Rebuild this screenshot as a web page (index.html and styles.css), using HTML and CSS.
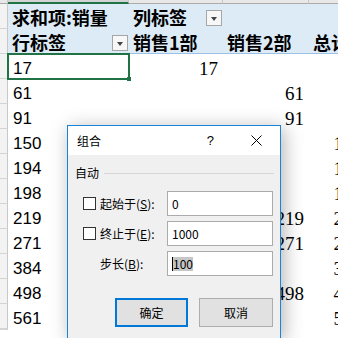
FILE: index.html
```html
<!DOCTYPE html>
<html>
<head>
<meta charset="utf-8">
<link rel="stylesheet" href="styles.css">
</head>
<body>
<div class="sheet">
  <div class="rh top"></div><div class="ch sel"></div><div class="ch"></div><div class="ch"></div><div class="ch"></div>

  <div class="rh"></div><div class="c hd">求和项:销量</div><div class="c hd">列标签<span class="dd"></span></div><div class="c hd"></div><div class="c hd"></div>
  <div class="rh"></div><div class="c hd hb">行标签<span class="dd"></span></div><div class="c hd hb">销售1部</div><div class="c hd hb">销售2部</div><div class="c hd hb">总计</div>

  <div class="rh"></div><div class="c lab active">17<span class="fh"></span></div><div class="c num">17</div><div class="c num"></div><div class="c num">17</div>
  <div class="rh"></div><div class="c lab">61</div><div class="c num"></div><div class="c num">61</div><div class="c num">61</div>
  <div class="rh"></div><div class="c lab">91</div><div class="c num"></div><div class="c num">91</div><div class="c num">91</div>
  <div class="rh"></div><div class="c lab">150</div><div class="c num">150</div><div class="c num"></div><div class="c num">150</div>
  <div class="rh"></div><div class="c lab">194</div><div class="c num">194</div><div class="c num"></div><div class="c num">194</div>
  <div class="rh"></div><div class="c lab">198</div><div class="c num">198</div><div class="c num"></div><div class="c num">198</div>
  <div class="rh"></div><div class="c lab">219</div><div class="c num"></div><div class="c num">219</div><div class="c num">219</div>
  <div class="rh"></div><div class="c lab">271</div><div class="c num"></div><div class="c num">271</div><div class="c num">271</div>
  <div class="rh"></div><div class="c lab">384</div><div class="c num">384</div><div class="c num"></div><div class="c num">384</div>
  <div class="rh"></div><div class="c lab">498</div><div class="c num"></div><div class="c num">498</div><div class="c num">498</div>
  <div class="rh"></div><div class="c lab">561</div><div class="c num">561</div><div class="c num"></div><div class="c num">561</div>
  <div class="rh"></div><div class="c lab"></div><div class="c num"></div><div class="c num"></div><div class="c num"></div>
</div>

<div class="dlg">
  <div class="titlebar">
    <span class="title">组合</span>
    <span class="help">?</span>
    <svg class="close" width="11" height="11" viewBox="0 0 11 11"><path d="M0.5 0.5L10.5 10.5M10.5 0.5L0.5 10.5" stroke="#000" stroke-width="1" fill="none"/></svg>
  </div>
  <div class="dbody">
    <div class="group"><span>自动</span><i class="sep"></i></div>
    <div class="fields">
      <span class="cb"></span><span class="lbl">起始于(<u>S</u>):</span><div class="inp">0</div>
      <span class="cb"></span><span class="lbl">终止于(<u>E</u>):</span><div class="inp">1000</div>
      <span></span><span class="lbl">步长(<u>B</u>):</span><div class="inp"><span class="caret"></span><span class="selt">100</span></div>
    </div>
    <div class="btns"><div class="btn ok">确定</div><div class="btn">取消</div></div>
  </div>
</div>
</body>
</html>
```

FILE: styles.css
```css
html, body {
  margin: 0;
  padding: 0;
  width: 338px;
  height: 338px;
  overflow: hidden;
  background: #fff;
}
body {
  position: relative;
  font-family: "Liberation Sans", "Noto Sans CJK SC", sans-serif;
  color: #000;
}
.sheet {
  display: grid;
  grid-template-columns: 8px 121px 94px 86px 58px;
  grid-template-rows: 4px repeat(13, 25px);
  width: 367px;
}
.rh {
  background: #f3f3f3;
  border-right: 1px solid #c8c8c8;
  border-bottom: 1px solid #d4d4d4;
  box-sizing: border-box;
}
.rh.top {
  background: #e8e8e8;
  border-bottom: 1px solid #ababab;
}
.ch {
  background: #e8e8e8;
  border-bottom: 1px solid #ababab;
  border-right: 1px solid #c8c8c8;
  box-sizing: border-box;
}
.ch.sel {
  background: #d2d2d2;
  border-bottom: 2px solid #217346;
}
.c {
  display: flex;
  align-items: flex-end;
  box-sizing: border-box;
  white-space: nowrap;
  position: relative;
}
.hd {
  background: #ddebf7;
  font-family: "Noto Sans CJK SC", sans-serif;
  font-weight: 700;
  font-size: 18px;
  line-height: 22px;
  padding-left: 4px;
  padding-right: 1px;
  padding-bottom: 1px;
}
.hd.hb {
  border-bottom: 1px solid #9bc2e6;
  padding-bottom: 0;
}
.dd {
  margin-left: auto;
  margin-bottom: 2px;
  width: 16px;
  height: 16px;
  box-sizing: border-box;
  border: 1px solid #a6a6a6;
  background: #f7f7f7;
  display: flex;
  align-items: center;
  justify-content: center;
  flex: none;
}
.dd::after {
  content: "";
  border-left: 3.5px solid transparent;
  border-right: 3.5px solid transparent;
  border-top: 4px solid #444;
  margin-top: 1px;
}
.lab {
  font-family: "Liberation Sans", sans-serif;
  font-size: 17px;
  line-height: 20px;
  padding-left: 5px;
}
.num {
  justify-content: flex-end;
  font-family: "Liberation Serif", serif;
  font-size: 19px;
  line-height: 20px;
  padding-right: 5px;
}
.active {
  outline: 2px solid #217346;
  outline-offset: -1px;
}
.fh {
  position: absolute;
  right: -2px;
  bottom: -2px;
  width: 4px;
  height: 4px;
  background: #217346;
}

/* dialog */
.dlg {
  position: absolute;
  left: 67px;
  top: 125px;
  width: 214px;
  height: 214px;
  box-sizing: border-box;
  border: 1px solid #1883d7;
  background: #f0f0f0;
  box-shadow: 3px 3px 18px rgba(0, 0, 0, 0.3);
  font-family: "Noto Sans CJK SC", sans-serif;
  font-size: 12px;
  display: flex;
  flex-direction: column;
}
.titlebar {
  height: 29px;
  background: #fff;
  display: flex;
  align-items: center;
  padding-left: 9px;
  padding-right: 18px;
  flex: none;
}
.title {
  flex: 1;
  line-height: 16px;
}
.help {
  font-family: "Liberation Sans", sans-serif;
  font-size: 13px;
  margin-right: 37px;
}
.close {
  display: block;
}
.dbody {
  padding: 9px 6px 0 7px;
  display: flex;
  flex-direction: column;
}
.group {
  height: 18px;
  display: flex;
  align-items: center;
  line-height: 18px;
}
.sep {
  flex: 1;
  height: 1px;
  background: #d5d5d5;
  margin-left: 5px;
}
.fields {
  margin-top: 9px;
  padding-left: 8px;
  display: grid;
  grid-template-columns: 17px 67px 106px;
  grid-auto-rows: 25px;
  row-gap: 5px;
  align-items: center;
}
.cb {
  width: 13px;
  height: 13px;
  box-sizing: border-box;
  border: 1px solid #333;
  background: #fff;
}
.lbl {
  white-space: nowrap;
  line-height: 16px;
}
.lbl u {
  text-decoration-thickness: 1px;
  text-underline-offset: 1px;
}
.inp {
  height: 25px;
  box-sizing: border-box;
  border: 1px solid #ababab;
  background: #fff;
  display: flex;
  align-items: center;
  padding-left: 4px;
  font-family: "Noto Sans CJK SC", sans-serif;
  font-size: 12px;
}
.caret {
  width: 1px;
  height: 14px;
  background: #000;
}
.selt {
  background: #c6c6c6;
  line-height: 14px;
}
.btns {
  margin-top: 22px;
  display: flex;
  justify-content: flex-end;
  gap: 11px;
  padding-right: 1px;
}
.btn {
  width: 74px;
  height: 29px;
  box-sizing: border-box;
  border: 1px solid #adadad;
  background: #e1e1e1;
  display: flex;
  align-items: center;
  justify-content: center;
}
.btn.ok {
  width: 73px;
  border: 2px solid #0078d7;
}
```
